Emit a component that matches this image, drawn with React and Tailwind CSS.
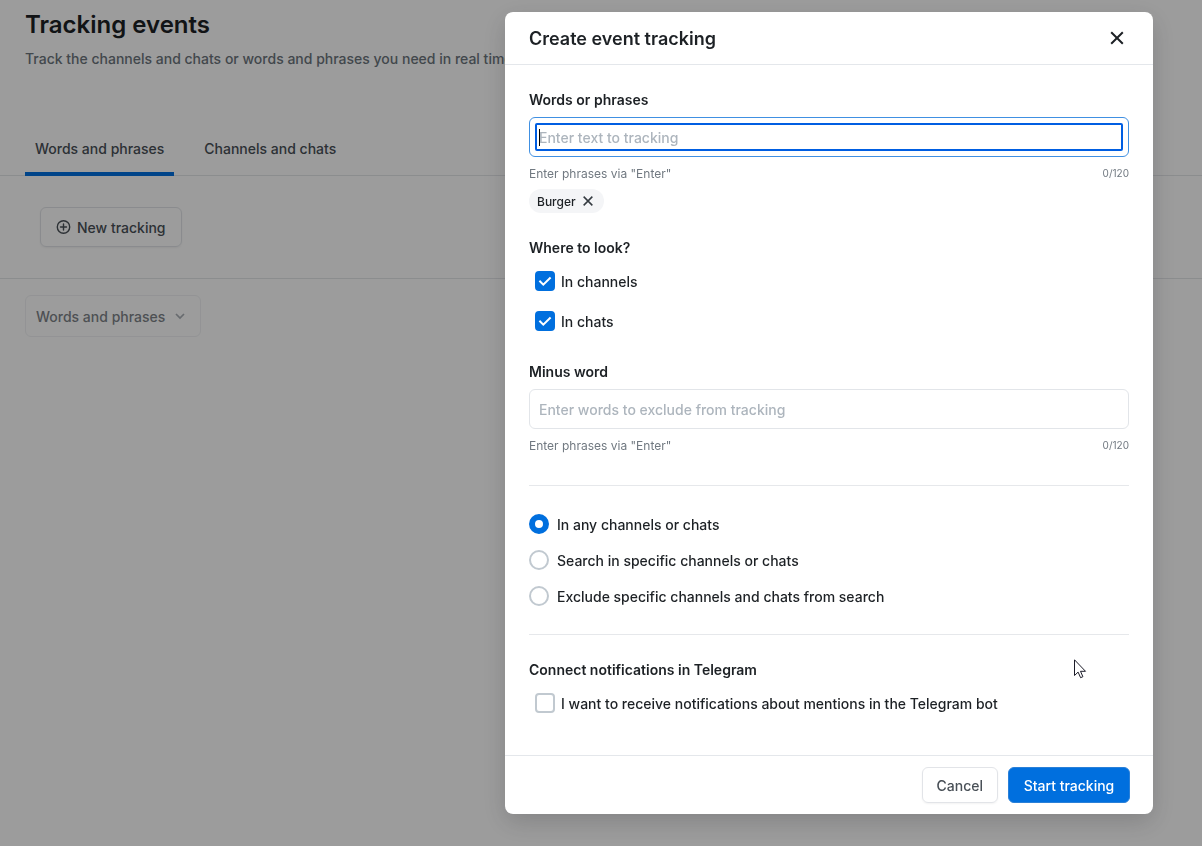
import React, { useState } from "react";

function PlusCircleIcon() {
  return (
    <svg width="15" height="16" viewBox="0 0 15 16" fill="none" stroke="currentColor" strokeWidth="1.4" strokeLinecap="round" aria-hidden="true">
      <circle cx="7.5" cy="8" r="6.2" />
      <path d="M7.5 5v6M4.5 8h6" />
    </svg>
  );
}

function CrossIcon({ size, stroke }) {
  return (
    <svg width={size} height={size} viewBox="0 0 16 16" fill="none" stroke="currentColor" strokeWidth={stroke} aria-hidden="true">
      <path d="M2.2 2.2l11.6 11.6M13.8 2.2L2.2 13.8" />
    </svg>
  );
}

function Checkbox({ label, defaultChecked }) {
  return (
    <label className="flex h-10 items-center gap-1.5 pl-1.5 text-sm font-medium">
      <span className="grid size-5 place-items-center">
        <input
          type="checkbox"
          defaultChecked={defaultChecked}
          className="peer col-start-1 row-start-1 size-5 appearance-none rounded border-2 border-[#c1c9d0] bg-white checked:border-[#006fde] checked:bg-[#006fde]"
        />
        <svg
          width="14"
          height="14"
          viewBox="0 0 14 14"
          fill="none"
          stroke="white"
          strokeWidth="2"
          className="pointer-events-none z-10 col-start-1 row-start-1 opacity-0 peer-checked:opacity-100"
          aria-hidden="true"
        >
          <path d="M1.4 6.7l3.9 3.9 7.3-7.1" />
        </svg>
      </span>
      <span className="pt-0.5">{label}</span>
    </label>
  );
}

function Radio({ label, defaultChecked }) {
  return (
    <label className="flex h-5 items-center gap-2 text-sm font-medium">
      <input
        type="radio"
        name="scope"
        defaultChecked={defaultChecked}
        className="size-5 appearance-none rounded-full border-2 border-[#c1c9d0] bg-white checked:border-6 checked:border-[#006fde]"
      />
      <span className="pt-0.5">{label}</span>
    </label>
  );
}

function Hint() {
  return (
    <div className="mt-2 flex h-4 items-center justify-between text-[#717981]">
      <span className="pt-px text-xs">Enter phrases via "Enter"</span>
      <span className="pt-px text-[10px]">0/120</span>
    </div>
  );
}

function Page() {
  return (
    <main className="pt-[9px]">
      <header className="px-6.25">
        <h1 className="text-2xl leading-8 font-semibold text-[#1d2125]">Tracking events</h1>
        <p className="mt-2 text-sm font-medium whitespace-nowrap text-[#6c757d]">
          Track the channels and chats or words and phrases you need in real time
        </p>
      </header>
      <div role="tablist" className="mt-[54px] flex gap-5 border-b border-[#e4e6e9] px-6.25 text-sm font-medium text-[#495057]">
        <button role="tab" aria-selected="true" className="-mb-px h-[53px] border-b-4 border-[#0070e0] px-2.5 pt-0.5">
          Words and phrases
        </button>
        <button role="tab" aria-selected="false" className="-mb-px h-[53px] border-b-4 border-transparent px-2.5 pt-0.5">
          Channels and chats
        </button>
      </div>
      <div className="border-b border-[#e4e6e9] px-10 py-[31px]">
        <button className="flex h-10 items-center gap-1.5 rounded-md border border-[#e2e4e8] px-[15px] text-sm font-medium text-[#495057] shadow-xs">
          <PlusCircleIcon />
          <span className="pt-0.5">New tracking</span>
        </button>
      </div>
      <div className="px-6.25 pt-4">
        <div className="grid w-44 items-center opacity-70">
          <select
            disabled
            aria-label="Tracking type"
            className="col-start-1 row-start-1 h-[42px] appearance-none rounded-md border border-[#eaecef] px-2.5 pt-0.5 text-sm font-medium text-[#495057]"
          >
            <option>Words and phrases</option>
          </select>
          <svg
            width="10"
            height="10"
            viewBox="0 0 10 10"
            fill="none"
            stroke="#868e96"
            strokeWidth="1.7"
            className="pointer-events-none col-start-1 row-start-1 mr-4 justify-self-end"
            aria-hidden="true"
          >
            <path d="M1 3l4 4 4-4" />
          </svg>
        </div>
      </div>
    </main>
  );
}

function Dialog() {
  const [phrase, setPhrase] = useState("");
  return (
    <div
      role="dialog"
      aria-modal="true"
      aria-labelledby="dialog-title"
      className="relative w-full max-w-[648px] rounded-lg bg-white text-[#1d2125] shadow-[0_8px_24px_rgba(33,37,41,0.2)]"
    >
      <header className="flex h-[53px] items-center justify-between border-b border-[#e4e7eb] px-6">
        <h2 id="dialog-title" className="pt-0.5 text-lg font-semibold">Create event tracking</h2>
        <button aria-label="Close" className="grid size-6 place-items-center">
          <CrossIcon size={16} stroke={2} />
        </button>
      </header>

      <form id="tracking-form" className="px-6 pt-6 pb-8">
        <label htmlFor="phrases" className="block pt-px text-sm font-semibold">Words or phrases</label>
        <div className="relative mt-[7px] rounded-md border border-[#4090e2] p-[5px]">
          <input
            id="phrases"
            value={phrase}
            onChange={(e) => setPhrase(e.target.value)}
            placeholder="Enter text to tracking"
            className="block h-7 w-full rounded-xs border-2 border-[#005ee2] px-0.5 text-sm font-medium caret-transparent outline-none placeholder:text-[#adb5bd]"
          />
          <span className="absolute top-[11px] left-[9px] h-[17px] w-px bg-black" />
        </div>
        <Hint />
        <div className="mt-2 flex">
          <span className="flex h-6 items-center gap-1.5 rounded-full bg-[#f4f5f7] pr-2.5 pl-2 text-xs font-medium">
            <span className="pt-px">Burger</span>
            <button type="button" aria-label="Remove Burger" className="grid size-3 place-items-center text-[#343a40]">
              <CrossIcon size={12} stroke={2} />
            </button>
          </span>
        </div>

        <fieldset className="mt-6">
          <legend className="pt-px text-sm font-semibold">Where to look?</legend>
          <div className="mt-[3px]">
            <Checkbox label="In channels" defaultChecked />
            <Checkbox label="In chats" defaultChecked />
          </div>
        </fieldset>

        <label htmlFor="minus" className="mt-5 block pt-px text-sm font-semibold">Minus word</label>
        <input
          id="minus"
          placeholder="Enter words to exclude from tracking"
          className="mt-[7px] block h-10 w-full rounded-md border border-[#e2e5e9] px-[9px] text-sm font-medium outline-none placeholder:text-[#adb5bd]"
        />
        <Hint />

        <hr className="mt-8 border-[#e6e8eb]" />
        <div role="radiogroup" aria-label="Search scope" className="my-7 flex flex-col gap-4">
          <Radio label="In any channels or chats" defaultChecked />
          <Radio label="Search in specific channels or chats" />
          <Radio label="Exclude specific channels and chats from search" />
        </div>
        <hr className="border-[#e6e8eb]" />

        <h3 className="mt-6 pt-px text-sm font-semibold">Connect notifications in Telegram</h3>
        <div className="mt-[3px]">
          <Checkbox label="I want to receive notifications about mentions in the Telegram bot" />
        </div>
      </form>

      <footer className="flex justify-end gap-2.5 border-t border-[#e4e7eb] px-[23px] py-[11px] text-sm font-medium">
        <button className="h-9 rounded-md border border-[#e2e4e8] px-3.5 pt-px text-[#495057] shadow-xs">Cancel</button>
        <button form="tracking-form" type="button" className="h-9 min-w-[122px] rounded-md border border-[#2a80d8] bg-[#006fde] px-3.5 pt-px text-white">
          Start tracking
        </button>
      </footer>

      <svg
        width="13"
        height="20"
        viewBox="0 0 13 20"
        className="pointer-events-none absolute top-[647px] left-[569px]"
        aria-hidden="true"
      >
        <path d="M.5 .8v15.7l3.6-3.4 2.5 5.6 2.3-1-2.4-5.4h5z" fill="white" stroke="#1b1b28" strokeWidth="1" />
      </svg>
    </div>
  );
}

export default function App() {
  return (
    <div className="min-h-screen bg-white font-['Inter',sans-serif]">
      <Page />
      <div className="fixed inset-0 flex items-start justify-end overflow-hidden bg-black/39 pt-3 pr-[49px]">
        <Dialog />
      </div>
    </div>
  );
}
